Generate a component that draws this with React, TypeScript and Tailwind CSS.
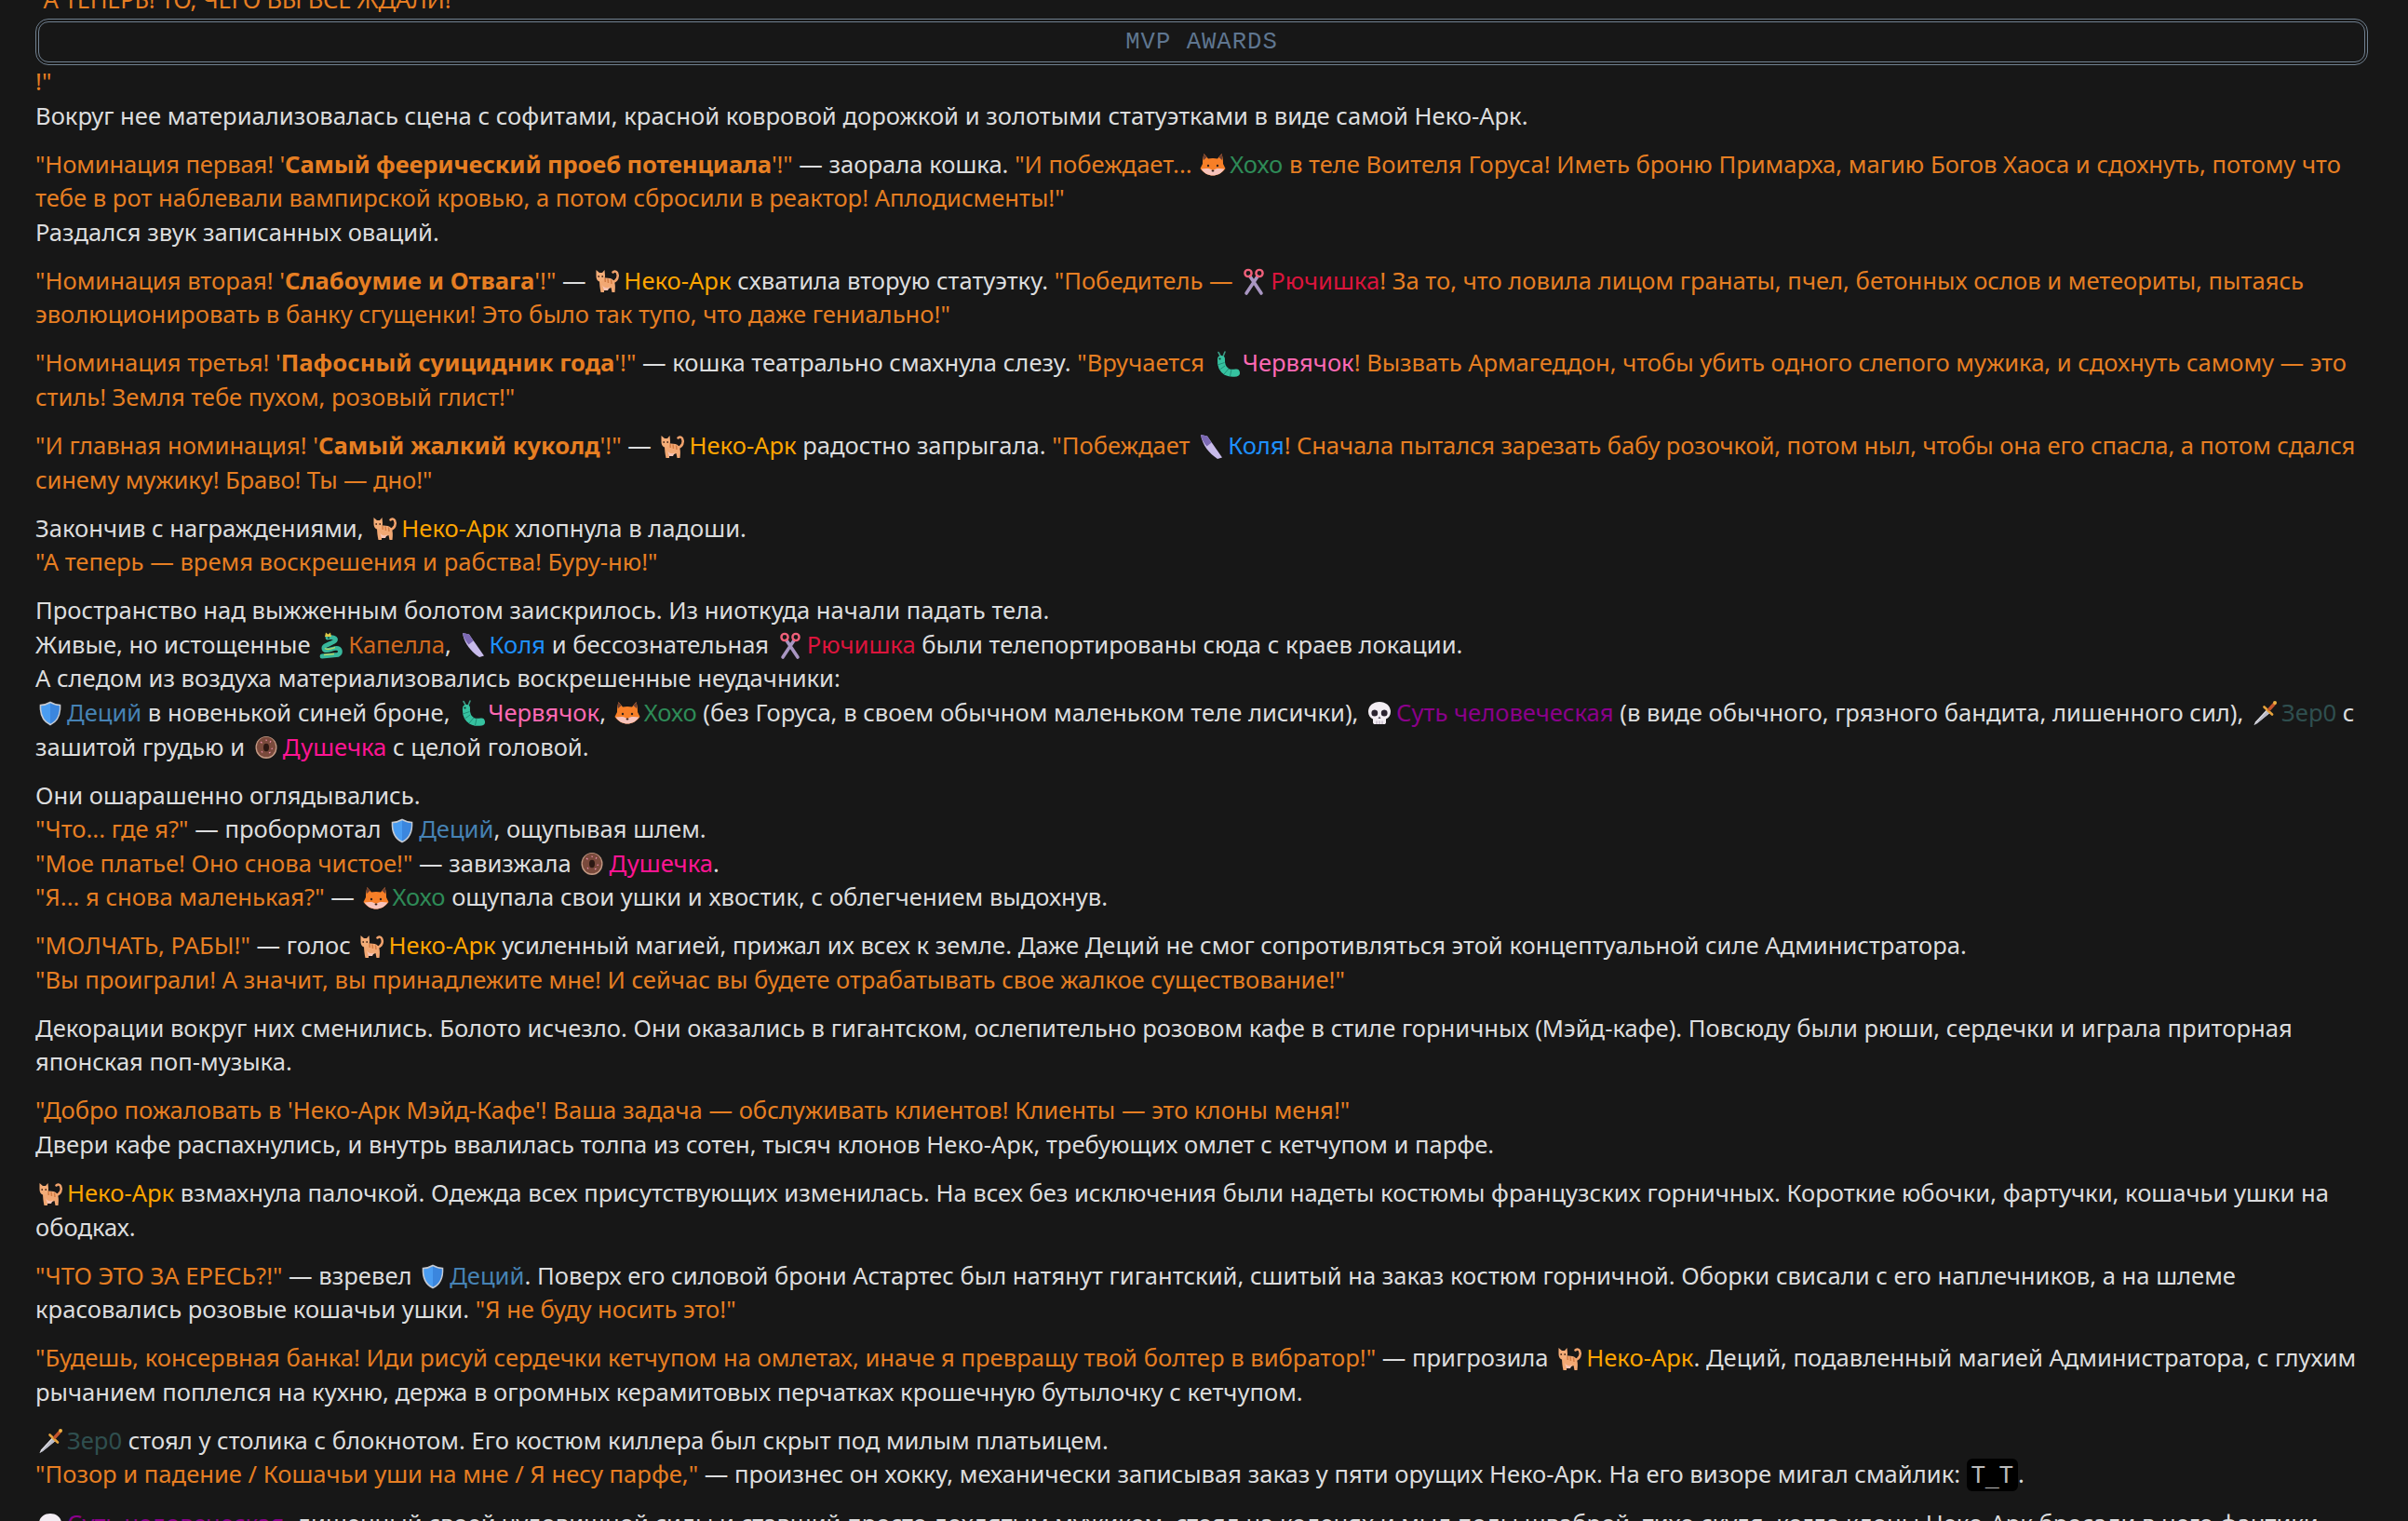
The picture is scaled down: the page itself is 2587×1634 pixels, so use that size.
import React from "react";

const O = ({ children }: { children: React.ReactNode }) => <span className="text-[#e67e22]">{children}</span>;

const Em = ({ children }: { children: React.ReactNode }) => (
  <svg viewBox="0 0 32 32" className="inline-block w-[32px] h-[32px] mr-[2px] align-[-7.5px]">{children}</svg>
);

const CatI = () => (
  <Em>
    <path d="M22 17C27 16 29 11 27 7C26 5 23.5 5 22.5 6.5" stroke="#f0a26c" strokeWidth="2.6" fill="none" strokeLinecap="round" />
    <path d="M8 14C12 12 20 12 23 15C25.5 18 25 24 24.5 28L21.5 28L20.5 23C17.5 24.5 15 24.5 13 23.5L13 28L9.5 28C8.5 24 8 19 8 14Z" fill="#f2a873" />
    <path d="M11 20C13 24 17 24 19 22L17 26L13 26Z" fill="#f8c4b4" />
    <path d="M17 13.5L17.5 18M20.5 14.5L21 19M14 13L14.3 17" stroke="#d27c44" strokeWidth="1.5" fill="none" />
    <path d="M4.5 10L4.5 4L8 7L11 7L13.5 4L14 10C14 14 12 16.5 9 16.5C6 16.5 4.5 14 4.5 10Z" fill="#f4ad78" />
    <circle cx="7.2" cy="11" r="0.9" fill="#4a2a1a" />
    <circle cx="11.2" cy="11" r="0.9" fill="#4a2a1a" />
  </Em>
);
const FoxI = () => (
  <Em>
    <path d="M6.5 4L11 9.5C14 8.7 18 8.7 21 9.5L25.5 4C27 9 27 12 27 15L29.5 20C26 25 21 27.5 16 27.5C11 27.5 6 25 2.5 20L5 15C5 12 5 9 6.5 4Z" fill="#f77f27" />
    <path d="M6.5 4L9.5 8L6 11C5.6 9 5.8 6.5 6.5 4ZM25.5 4L22.5 8L26 11C26.4 9 26.2 6.5 25.5 4Z" fill="#6e4032" />
    <path d="M3.5 20.5C9 19.5 13 19.5 16 22C19 19.5 23 19.5 28.5 20.5C25 25.5 20.5 27.5 16 27.5C11.5 27.5 7 25.5 3.5 20.5Z" fill="#f7c3bb" />
    <circle cx="11" cy="17" r="1.2" fill="#33201a" />
    <circle cx="21" cy="17" r="1.2" fill="#33201a" />
    <ellipse cx="16" cy="22.6" rx="1.4" ry="1" fill="#33201a" />
  </Em>
);
const WormI = () => (
  <Em>
    <path d="M8 3.5L10.5 8M15 3L13 8" stroke="#3d9c86" strokeWidth="1.6" fill="none" strokeLinecap="round" />
    <path d="M11 11C10.5 17 13 22 17 24.5C20 26 24 26 27 25.5" stroke="#36c2a0" strokeWidth="8" strokeLinecap="round" fill="none" />
    <path d="M7 17L14.5 14.5M9.5 22L15 18M14 27L19 21M20.5 29L22 22" stroke="#1f8f78" strokeWidth="1" fill="none" />
    <circle cx="9.5" cy="10.5" r="1.1" fill="#12332c" />
  </Em>
);
const ScissorsI = () => (
  <Em>
    <path d="M12 11L24 29M20 11L8 29" stroke="#a996c2" strokeWidth="3.6" strokeLinecap="round" fill="none" />
    <circle cx="10" cy="7.5" r="3.6" stroke="#f0607a" strokeWidth="2.4" fill="none" />
    <circle cx="22" cy="7.5" r="3.6" stroke="#f0607a" strokeWidth="2.4" fill="none" />
  </Em>
);
const KnifeI = () => (
  <Em>
    <path d="M5 3L12 4.5L28 27.5L23 29C14 23 6.5 14 5 3Z" fill="#c8bbea" />
    <path d="M5 3L12 4.5L16.5 11.5L11.5 15.5C8.5 12 5.8 8 5 3Z" fill="#7c69b4" />
  </Em>
);
const ShieldI = () => (
  <Em>
    <path d="M16 4.5C19.5 6.5 23 7.5 26.5 7.5C27 17 24.5 24.5 16 28.5C7.5 24.5 5 17 5.5 7.5C9 7.5 12.5 6.5 16 4.5Z" fill="#4a9df2" stroke="#c6cad2" strokeWidth="1.6" />
    <path d="M16 5.5C19.5 7.3 22.5 8.2 25.6 8.3C26 17 23.5 24 16 27.6Z" fill="#3b86de" />
  </Em>
);
const DonutI = () => (
  <Em>
    <ellipse cx="16" cy="16" rx="11.5" ry="12" fill="#c49a84" />
    <ellipse cx="16" cy="15.5" rx="10.2" ry="10.8" fill="#7a4a3c" />
    <ellipse cx="16" cy="16" rx="3" ry="4.2" fill="#2c1813" />
    <path d="M10 10L11.5 11.2M21 9L20 10.6M23 17L21.5 17.6M11 20L12 21.5M19 22L20.5 21M16 7.5L16.2 9" stroke="#f08fb0" strokeWidth="1.1" />
  </Em>
);
const SkullI = () => (
  <Em>
    <path d="M16 4C23 4 28 8.5 28 14.5C28 18.5 26 21 23 22.5L23 26C23 27.5 22 28 21 28L11 28C10 28 9 27.5 9 26L9 22.5C6 21 4 18.5 4 14.5C4 8.5 9 4 16 4Z" fill="#f3edf3" />
    <ellipse cx="10.8" cy="16" rx="3.4" ry="3.5" fill="#2b2330" />
    <ellipse cx="21.2" cy="16" rx="3.4" ry="3.5" fill="#2b2330" />
    <path d="M16 19.5L14.5 22L17.5 22Z" fill="#5a5060" />
    <path d="M13 24.5V28M16 24.5V28M19 24.5V28" stroke="#b3a6ba" strokeWidth="1" />
  </Em>
);
const DaggerI = () => (
  <Em>
    <path d="M18 12.5L21.5 16L8 27L4.5 29L6 25.5Z" fill="#e6e6ec" />
    <path d="M19 13L21.5 16L8 27L4.5 29Z" fill="#b9bac6" />
    <path d="M15.5 9.5L24 17.5" stroke="#e6a23a" strokeWidth="2.6" strokeLinecap="round" />
    <path d="M21 12L26 6.5" stroke="#c2542c" strokeWidth="3.4" strokeLinecap="round" />
    <circle cx="27" cy="5" r="2" fill="#eeb040" />
  </Em>
);
const DragonI = () => (
  <Em>
    <path d="M12 8C20 6.5 23 10 18.5 12.5C13 15.5 7 16.5 8 20C9 23.5 15 20.5 20 19.5C26 18.5 27 24 23 26.5L6 28" stroke="#38b79c" strokeWidth="4.8" strokeLinecap="round" fill="none" />
    <path d="M9 7L10 2.5L12.5 4.5L15 2.5L16 7Z" fill="#dcc848" />
    <path d="M9 19.5C12 22 17 19.5 20 18.5M8 26.5L19 25.5" stroke="#b8d86a" strokeWidth="1.4" fill="none" />
    <circle cx="13" cy="8.2" r="0.9" fill="#12332c" />
  </Em>
);

const N = ({ e, c, t }: { e: React.ReactNode; c: string; t: string }) => (
  <span style={{ color: c }}>{e}{t}</span>
);
const Neko = () => <N e={<CatI />} c="#ffa500" t="Неко-Арк" />;
const Hoho = () => <N e={<FoxI />} c="#2e8b57" t="Хохо" />;
const Worm = () => <N e={<WormI />} c="#ff69b4" t="Червячок" />;
const Rio = () => <N e={<ScissorsI />} c="#dc143c" t="Рючишка" />;
const Kolya = () => <N e={<KnifeI />} c="#1e90ff" t="Коля" />;
const Dec = () => <N e={<ShieldI />} c="#4682b4" t="Деций" />;
const Dush = () => <N e={<DonutI />} c="#ff1493" t="Душечка" />;
const Sut = () => <N e={<SkullI />} c="#8b008b" t="Суть человеческая" />;
const Zer = () => <N e={<DaggerI />} c="#2f4f4f" t="Зер0" />;
const Kap = () => <N e={<DragonI />} c="#d2691e" t="Капелла" />;

export default function App() {
  return (
    <div className="h-[1634px] overflow-hidden bg-[#171717] text-[#dcddde] pl-[38px] pr-[43px] text-[25.6px] leading-[36.6px] font-['Noto_Sans',sans-serif]">
      <div className="-mt-[18px]">
        <div className="tracking-[-0.25px]"><O>"А ТЕПЕРЬ! ТО, ЧЕГО ВЫ ВСЕ ЖДАЛИ!</O></div>
        <div className="h-[50px] mt-[1.5px] border-[4px] border-double border-[#708090] rounded-[14px] flex items-center justify-center pt-[2px] text-[#5f7690] font-['Courier_New','Liberation_Mono',monospace] text-[25.6px] tracking-[1px]">MVP AWARDS</div>
        <div><O>!"</O></div>
        <div>Вокруг нее материализовалась сцена с софитами, красной ковровой дорожкой и золотыми статуэтками в виде самой Неко-Арк.</div>
        <p className="mt-[15.4px]"><span className="tracking-[-0.15px]"><O>"Номинация первая! '<b>Самый феерический проеб потенциала</b>'!"</O></span> — заорала кошка. <O>"И побеждает... </O><Hoho /><O> в теле Воителя Горуса! Иметь броню Примарха, магию Богов Хаоса и сдохнуть, потому что тебе в рот наблевали вампирской кровью, а потом сбросили в реактор! Аплодисменты!"</O><br />Раздался звук записанных оваций.</p>
        <p className="mt-[15.4px]"><O>"Номинация вторая! '<b>Слабоумие и Отвага</b>'!"</O> — <Neko /> схватила вторую статуэтку. <O>"Победитель — </O><Rio /><O>! За то, что ловила лицом гранаты, пчел, бетонных ослов и метеориты, пытаясь эволюционировать в банку сгущенки! Это было так тупо, что даже гениально!"</O></p>
        <p className="mt-[15.4px]"><O>"Номинация третья! '<b>Пафосный суицидник года</b>'!"</O> — кошка театрально смахнула слезу. <O>"Вручается </O><Worm /><span className="tracking-[-0.05px]"><O>! Вызвать Армагеддон, чтобы убить одного слепого мужика, и сдохнуть самому — это стиль! Земля тебе пухом, розовый глист!"</O></span></p>
        <p className="mt-[15.4px]"><O>"И главная номинация! '<b>Самый жалкий куколд</b>'!"</O> — <Neko /> радостно запрыгала. <O>"Побеждает </O><Kolya /><span className="tracking-[-0.12px]"><O>! Сначала пытался зарезать бабу розочкой, потом ныл, чтобы она его спасла, а потом сдался синему мужику! Браво! Ты — дно!"</O></span></p>
        <p className="mt-[15.4px]">Закончив с награждениями, <Neko /> хлопнула в ладоши.<br /><O>"А теперь — время воскрешения и рабства! Буру-ню!"</O></p>
        <p className="mt-[15.4px]">Пространство над выжженным болотом заискрилось. Из ниоткуда начали падать тела.<br />Живые, но истощенные <Kap />, <Kolya /> и бессознательная <Rio /> были телепортированы сюда с краев локации.<br />А следом из воздуха материализовались воскрешенные неудачники:<br /><Dec /> в новенькой синей броне, <Worm />, <Hoho /> (без Горуса, в своем обычном маленьком теле лисички), <Sut /> (в виде обычного, грязного бандита, лишенного сил), <Zer /> с зашитой грудью и <Dush /> с целой головой.</p>
        <p className="mt-[15.4px]">Они ошарашенно оглядывались.<br /><O>"Что... где я?"</O> — пробормотал <Dec />, ощупывая шлем.<br /><O>"Мое платье! Оно снова чистое!"</O> — завизжала <Dush />.<br /><O>"Я... я снова маленькая?"</O> — <Hoho /> ощупала свои ушки и хвостик, с облегчением выдохнув.</p>
        <p className="mt-[15.4px]"><O>"МОЛЧАТЬ, РАБЫ!"</O> — голос <Neko /> усиленный магией, прижал их всех к земле. Даже Деций не смог сопротивляться этой концептуальной силе Администратора.<br /><O>"Вы проиграли! А значит, вы принадлежите мне! И сейчас вы будете отрабатывать свое жалкое существование!"</O></p>
        <p className="mt-[15.4px]">Декорации вокруг них сменились. Болото исчезло. Они оказались в гигантском, ослепительно розовом кафе в стиле горничных (Мэйд-кафе). Повсюду были рюши, сердечки и играла приторная японская поп-музыка.</p>
        <p className="mt-[15.4px]"><O>"Добро пожаловать в 'Неко-Арк Мэйд-Кафе'! Ваша задача — обслуживать клиентов! Клиенты — это клоны меня!"</O><br />Двери кафе распахнулись, и внутрь ввалилась толпа из сотен, тысяч клонов Неко-Арк, требующих омлет с кетчупом и парфе.</p>
        <p className="mt-[15.4px]"><Neko /> взмахнула палочкой. Одежда всех присутствующих изменилась. На всех без исключения были надеты костюмы французских горничных. Короткие юбочки, фартучки, кошачьи ушки на ободках.</p>
        <p className="mt-[15.4px]"><O>"ЧТО ЭТО ЗА ЕРЕСЬ?!"</O> — взревел <Dec />. Поверх его силовой брони Астартес был натянут гигантский, сшитый на заказ костюм горничной. Оборки свисали с его наплечников, а на шлеме красовались розовые кошачьи ушки. <O>"Я не буду носить это!"</O></p>
        <p className="mt-[15.4px]"><O>"Будешь, консервная банка! Иди рисуй сердечки кетчупом на омлетах, иначе я превращу твой болтер в вибратор!"</O> — пригрозила <Neko />. Деций, подавленный магией Администратора, с глухим рычанием поплелся на кухню, держа в огромных керамитовых перчатках крошечную бутылочку с кетчупом.</p>
        <p className="mt-[15.4px]"><Zer /> стоял у столика с блокнотом. Его костюм киллера был скрыт под милым платьицем.<br /><O>"Позор и падение / Кошачьи уши на мне / Я несу парфе,"</O> — произнес он хокку, механически записывая заказ у пяти орущих Неко-Арк. На его визоре мигал смайлик: <code className="bg-black rounded-[6px] px-[5px] py-[3px] text-[#bbbbbb] text-[25px] font-['DejaVu_Sans_Mono',monospace]">T_T</code>.</p>
        <p className="mt-[15.4px]"><Sut />, лишенный своей чудовищной силы и ставший просто дохлятым мужиком, стоял на коленях и мыл полы шваброй, тихо скуля, когда клоны Неко-Арк бросали в него фантики.</p>
      </div>
    </div>
  );
}
